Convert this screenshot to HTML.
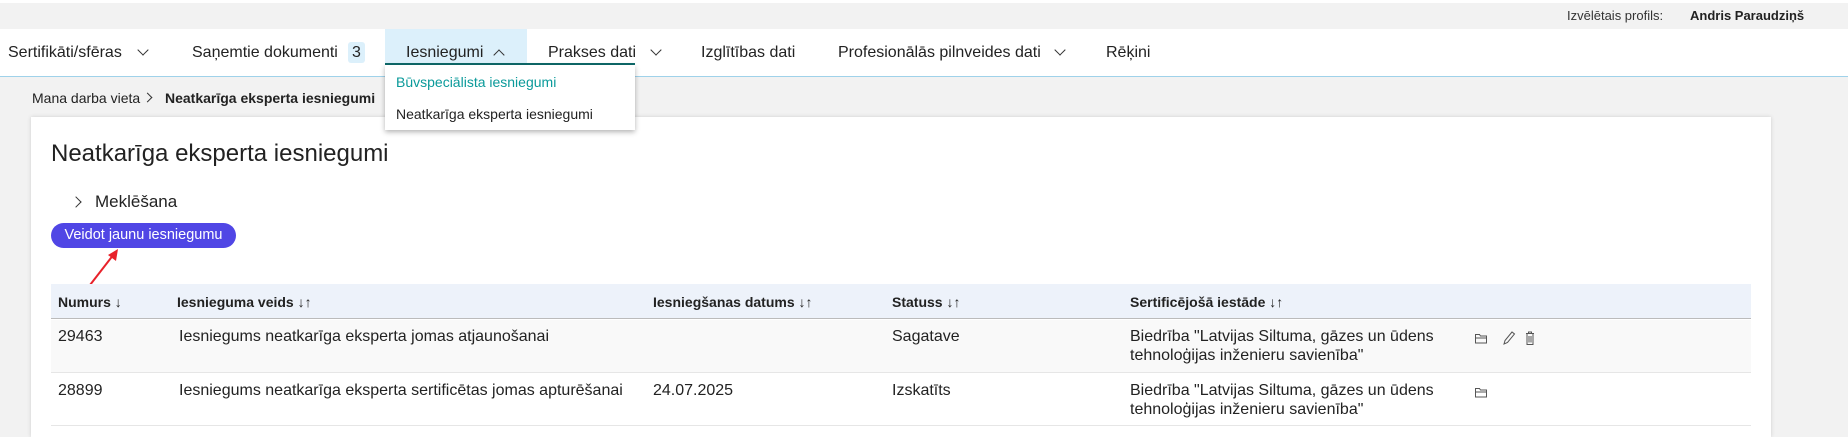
<!DOCTYPE html>
<html><head><meta charset="utf-8"><style>
*{margin:0;padding:0;box-sizing:border-box}
body{width:1848px;height:431px;overflow:hidden;background:#f2f2f2;font-family:"Liberation Sans",Arial,sans-serif;color:#222;position:relative}
.a{position:absolute;white-space:nowrap}
.nav{font-size:16px;color:#222;top:44px}
.chev{display:inline-block;width:8px;height:8px;border-right:1.3px solid #333;border-bottom:1.3px solid #333;transform:rotate(45deg)}
.th{font-size:14px;font-weight:bold;top:294px;color:#222}
.td{font-size:16px;color:#222;line-height:19px}
</style></head><body>
<div class="a" style="left:0;top:0;width:1848px;height:3px;background:#fff"></div>
<div class="a" style="left:1567px;top:8px;font-size:13px;color:#333">Izvēlētais profils:</div>
<div class="a" style="left:1690px;top:8px;font-size:13px;font-weight:bold;color:#222">Andris Paraudziņš</div>
<div class="a" style="left:0;top:29px;width:1848px;height:48px;background:#fff;border-bottom:1.5px solid #9fd2ea"></div>
<div class="a" style="left:385px;top:29px;width:142px;height:35px;background:#dcf0fb"></div>
<div class="a" style="left:385px;top:63px;width:250px;height:2px;background:#0e6a6a"></div>
<div class="a nav" style="left:8px">Sertifikāti/sfēras</div>
<span class="a chev" style="left:139px;top:46px"></span>
<div class="a nav" style="left:192px">Saņemtie dokumenti</div>
<div class="a" style="left:348px;top:42px;width:17px;height:21px;background:#dcf0fb;border-radius:3px;font-size:16px;text-align:center;line-height:21px">3</div>
<div class="a nav" style="left:406px">Iesniegumi</div>
<span class="a chev" style="left:495px;top:51px;transform:rotate(225deg)"></span>
<div class="a nav" style="left:548px">Prakses dati</div>
<span class="a chev" style="left:652px;top:46px"></span>
<div class="a nav" style="left:701px">Izglītības dati</div>
<div class="a nav" style="left:838px">Profesionālās pilnveides dati</div>
<span class="a chev" style="left:1056px;top:46px"></span>
<div class="a nav" style="left:1106px">Rēķini</div>
<div class="a" style="left:32px;top:90px;font-size:14px;color:#222">Mana darba vieta</div>
<span class="a chev" style="left:144px;top:94px;width:7px;height:7px;transform:rotate(-45deg)"></span>
<div class="a" style="left:165px;top:90px;font-size:14px;font-weight:bold">Neatkarīga eksperta iesniegumi</div>
<div class="a" style="left:31px;top:117px;width:1740px;height:320px;background:#fff;box-shadow:0 0 4px rgba(0,0,0,.15)"></div>
<div class="a" style="left:51px;top:140px;font-size:24px;color:#222">Neatkarīga eksperta iesniegumi</div>
<span class="a chev" style="left:72px;top:198px;width:8px;height:8px;transform:rotate(-45deg)"></span>
<div class="a" style="left:95px;top:192px;font-size:17px">Meklēšana</div>
<div class="a" style="left:51px;top:223px;width:185px;height:25px;border-radius:13px;background:#5046e5;color:#fff;font-size:14.5px;text-align:center;line-height:25px">Veidot jaunu iesniegumu</div>
<svg class="a" style="left:80px;top:245px" width="45" height="45"><line x1="10" y1="40" x2="34" y2="9" stroke="#e8212a" stroke-width="2"/><polygon points="38,4 28,10 36,16" fill="#e8212a"/></svg>
<div class="a" style="left:51px;top:284px;width:1700px;height:35px;background:#edf2fa;border-bottom:1.5px solid #bbb"></div>
<div class="a" style="left:51px;top:320px;width:1700px;height:53px;background:#f9f9f9;border-bottom:1px solid #e6e6e6"></div>
<div class="a" style="left:51px;top:425px;width:1700px;height:1px;background:#e6e6e6"></div>
<div class="a th" style="left:58px">Numurs ↓</div>
<div class="a th" style="left:177px">Iesnieguma veids ↓↑</div>
<div class="a th" style="left:653px">Iesniegšanas datums ↓↑</div>
<div class="a th" style="left:892px">Statuss ↓↑</div>
<div class="a th" style="left:1130px">Sertificējošā iestāde ↓↑</div>
<div class="a td" style="left:58px;top:327px">29463</div>
<div class="a td" style="left:179px;top:327px">Iesniegums neatkarīga eksperta jomas atjaunošanai</div>
<div class="a td" style="left:892px;top:327px">Sagatave</div>
<div class="a td" style="left:1130px;top:327px">Biedrība "Latvijas Siltuma, gāzes un ūdens<br>tehnoloģijas inženieru savienība"</div>
<div class="a td" style="left:58px;top:381px">28899</div>
<div class="a td" style="left:179px;top:381px">Iesniegums neatkarīga eksperta sertificētas jomas apturēšanai</div>
<div class="a td" style="left:653px;top:381px">24.07.2025</div>
<div class="a td" style="left:892px;top:381px">Izskatīts</div>
<div class="a td" style="left:1130px;top:381px">Biedrība "Latvijas Siltuma, gāzes un ūdens<br>tehnoloģijas inženieru savienība"</div>
<svg class="a" style="left:1474px;top:330px" width="70" height="16" fill="none" stroke="#555" stroke-width="1">
<path d="M1.5 4.5h4l1 1.5h6v7h-11z M1.5 8h11"/>
<path d="M30 14l1-3.5 7-8.5 2.5 2-7 8.5z"/>
<path d="M52 3.5h8 M54.5 3.5v-1.5h3v1.5 M53 4v10.5h6v-10.5 M55 6v6.5 M57 6v6.5"/>
</svg>
<svg class="a" style="left:1474px;top:384px" width="16" height="16" fill="none" stroke="#555" stroke-width="1">
<path d="M1.5 4.5h4l1 1.5h6v7h-11z M1.5 8h11"/>
</svg>
<div class="a" style="left:385px;top:65px;width:250px;height:65px;background:#fff;box-shadow:0 2px 5px rgba(0,0,0,.3)"></div>
<div class="a" style="left:396px;top:74px;font-size:14px;color:#0a9a9a">Būvspeciālista iesniegumi</div>
<div class="a" style="left:396px;top:106px;font-size:14px;color:#222">Neatkarīga eksperta iesniegumi</div>
</body></html>
